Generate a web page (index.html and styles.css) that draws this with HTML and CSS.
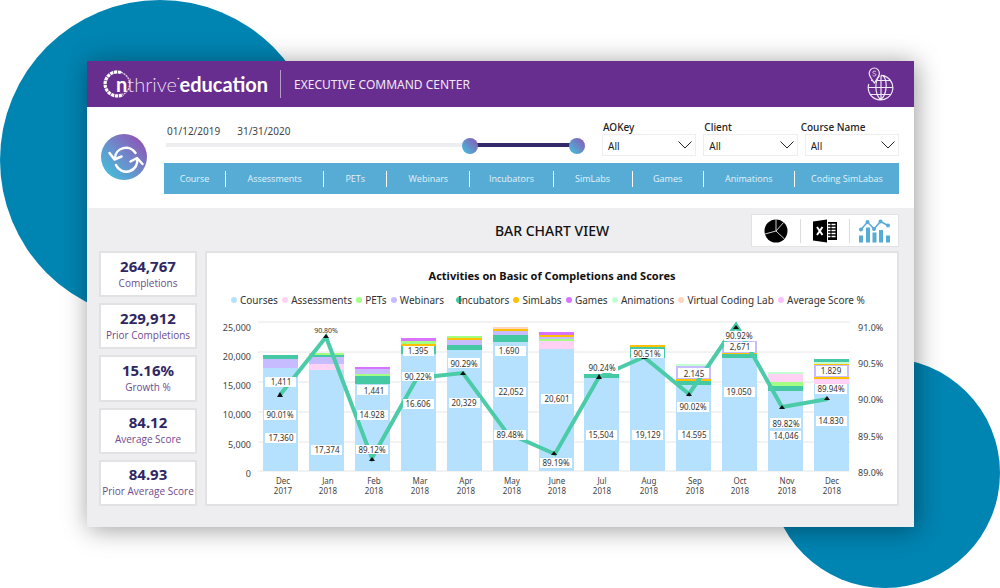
FILE: index.html
```html
<!DOCTYPE html>
<html lang="en">
<head>
<meta charset="utf-8">
<meta name="viewport" content="width=device-width, initial-scale=1">
<title>Executive Command Center</title>
<link rel="stylesheet" href="styles.css">
</head>
<body>
<div class="circle circle-left"></div>
<div class="circle circle-right"></div>
<main class="window">
  <header class="topbar">
    <div class="logo">
      <svg class="logo-ring" viewBox="0 0 28 28" width="28" height="28" aria-hidden="true">
        <path d="M18 2.600A12 12 0 1 0 20 24.400" fill="none" stroke="#fff" stroke-width="3.200" stroke-dasharray="3.200 0.700"/>
        <path d="M18 2.400A12 12 0 0 1 20 24.600" fill="none" stroke="#e4d6ee" stroke-width="1.300" stroke-dasharray="2 0.800"/>
      </svg>
      <span class="logo-n">n</span><span class="logo-thrive">thrive</span><span class="logo-mark">·</span><span class="logo-education">education</span>
    </div>
    <h1 class="app-title">EXECUTIVE COMMAND CENTER</h1>
    <svg class="globe" viewBox="0 0 27 34" width="27" height="34" fill="none" stroke="#f1e9f6" stroke-width="1.200" aria-hidden="true">
      <path d="M14 8.400A12.300 12.300 0 1 1 1.800 17M12.500 8.700C8 13 7 27 13.700 32.500M16 8.700C21 14 20 28 13.700 32.500M14 8.500V32.500M1.500 20.500H26M4 13.500H6M10 13.500H23.500M3.700 27.500H23.700"/>
      <path d="M7.300 16C4.500 11.800 2.200 9.500 2.200 6.300A5.100 5.300 0 0 1 12.400 6.300C12.400 9.500 10 11.800 7.300 16Z"/>
      <path d="M9 4.800C8.500 3.800 5.800 3.800 5.800 5.300C5.800 6.900 9 6.100 9 7.800C9 9.300 6 9.400 5.500 8.100" stroke-width=".8"/>
    </svg>
  </header>

  <section class="controls">
    <button class="refresh" type="button" aria-label="Refresh">
      <svg viewBox="0 0 46 46" width="46" height="46" fill="none" stroke="#fff" stroke-width="2.500" stroke-linecap="round" stroke-linejoin="round">
        <path d="M34.500 19A11 10.500 0 0 0 14 24M8.500 19L13.500 25.500L20.500 22.500M15 31A11 10.500 0 0 0 36 25M29.500 27.500L36 24L41.500 30"/>
      </svg>
    </button>
    <div class="control-rows">
      <div class="filter-row">
        <div class="date-range">
          <div class="dates"><span>01/12/2019</span><span>31/31/2020</span></div>
          <div class="slider">
            <input type="range" min="0" max="403" value="296" aria-label="Start date">
            <input type="range" min="0" max="403" value="403" aria-label="End date">
          </div>
        </div>
        <div class="filters">
          <div class="filter">
            <label for="aokey">AOKey</label>
            <div class="select-box"><select id="aokey"><option>All</option></select><svg viewBox="0 0 14 8" width="14" height="8"><path d="M.5 .5L7 7L13.500 .5"/></svg></div>
          </div>
          <div class="filter">
            <label for="client">Client</label>
            <div class="select-box"><select id="client"><option>All</option></select><svg viewBox="0 0 14 8" width="14" height="8"><path d="M.5 .5L7 7L13.500 .5"/></svg></div>
          </div>
          <div class="filter">
            <label class="label-wide" for="course">Course Name</label>
            <div class="select-box"><select id="course"><option>All</option></select><svg viewBox="0 0 14 8" width="14" height="8"><path d="M.5 .5L7 7L13.500 .5"/></svg></div>
          </div>
        </div>
      </div>
      <nav class="tabs">
        <a href="#course">Course</a><a href="#assessments">Assessments</a><a href="#pets">PETs</a><a href="#webinars">Webinars</a><a href="#incubators">Incubators</a><a href="#simlabs">SimLabs</a><a href="#games">Games</a><a href="#animations">Animations</a><a href="#coding">Coding SimLabas</a>
      </nav>
    </div>
  </section>

  <section class="view">
    <div class="view-head">
      <h2>BAR CHART VIEW</h2>
      <div class="view-buttons">
        <button type="button" aria-label="Pie chart">
          <svg viewBox="0 0 24 24" width="24" height="24"><circle cx="12" cy="12" r="11.500"/><path d="M12 .5V12L1 15M12 12L20 19.500M12 12L19.500 3.500" fill="none" stroke="#fff" stroke-width=".8"/></svg>
        </button>
        <button type="button" aria-label="Export to Excel">
          <svg viewBox="0 0 24 24" width="24" height="24"><path d="M0 2.500L14 .5V23.500L0 21.500ZM15 3H24V21H15Z"/><path d="M4 8L9.500 16M9.500 8L4 16" stroke="#fff" stroke-width="2"/><path d="M15 5.500H17.500M18.500 5.500H22.500M15 8.500H17.500M18.500 8.500H22.500M15 11.500H17.500M18.500 11.500H22.500M15 14.500H17.500M18.500 14.500H22.500M15 17.500H17.500M18.500 17.500H22.500" stroke="#fff" stroke-width="1.700"/></svg>
        </button>
        <button type="button" aria-label="Bar chart">
          <svg viewBox="0 0 32 24" width="32" height="24" fill="#56acd4"><path d="M1 16.500H5V23.500H1ZM8 8.500H12V23.500H8ZM14.500 13.500H18.500V23.500H14.500ZM21 11H25V23.500H21ZM28 16.500H32V23.500H28Z"/><path d="M3 10.500L9.500 3L16 10L22.500 2.500L30 6.500" fill="none" stroke="#56acd4" stroke-width="1.500"/><circle cx="3" cy="10.500" r="2"/><circle cx="9.500" cy="3" r="2"/><circle cx="16" cy="10" r="2"/><circle cx="22.500" cy="2.500" r="2"/><circle cx="30" cy="6.500" r="2"/></svg>
        </button>
      </div>
    </div>

    <div class="view-body">
      <div class="kpis">
        <div class="kpi"><strong>264,767</strong><span>Completions</span></div>
        <div class="kpi"><strong>229,912</strong><span>Prior Completions</span></div>
        <div class="kpi"><strong>15.16%</strong><span>Growth %</span></div>
        <div class="kpi"><strong>84.12</strong><span>Average Score</span></div>
        <div class="kpi"><strong>84.93</strong><span>Prior Average Score</span></div>
      </div>
      <div class="panel">
        <h3>Activities on Basic of Completions and Scores</h3>
        <ul class="legend">
          <li><i class="dot bg-courses"></i>Courses</li>
          <li><i class="dot bg-assess"></i>Assessments</li>
          <li><i class="dot bg-pets"></i>PETs</li>
          <li><i class="dot bg-web"></i>Webinars</li>
          <li class="overlap"><i class="dot bg-inc"></i>Incubators</li>
          <li><i class="dot bg-sim"></i>SimLabs</li>
          <li><i class="dot bg-games"></i>Games</li>
          <li><i class="dot bg-anim"></i>Animations</li>
          <li><i class="dot bg-lab"></i>Virtual Coding Lab</li>
          <li><i class="dot bg-score"></i>Average Score %</li>
        </ul>
        <svg class="chart" viewBox="207 316 690 184" role="img" aria-label="Stacked completions by month with average score line">
          <path class="grid" d="M258 322H850M258 352H850M258 382H850M258 412H850M258 442H850M258 471H850"/>
          <g class="courses">
            <rect x="263" y="368" width="35" height="103"/><rect x="309" y="370" width="35" height="101"/><rect x="355" y="384" width="35" height="87"/><rect x="401" y="354" width="35" height="117"/><rect x="447" y="350" width="35" height="121"/><rect x="493" y="342" width="35" height="129"/><rect x="539" y="349" width="35" height="122"/><rect x="584" y="378" width="35" height="93"/><rect x="630" y="358" width="35" height="113"/><rect x="676" y="385" width="35" height="86"/><rect x="722" y="358" width="35" height="113"/><rect x="768" y="391" width="35" height="80"/><rect x="814" y="384" width="35" height="87"/>
          </g>
          <g class="assess">
            <rect x="309" y="364" width="35" height="6"/><rect x="539" y="341" width="35" height="8"/><rect x="768" y="374" width="35" height="8"/><rect x="814" y="379" width="35" height="5"/>
          </g>
          <g class="pets">
            <rect x="309" y="353" width="35" height="2"/><rect x="355" y="374" width="35" height="2"/><rect x="401" y="341" width="35" height="3"/><rect x="447" y="336" width="35" height="2"/><rect x="539" y="339" width="35" height="2"/><rect x="768" y="382" width="35" height="4"/>
          </g>
          <g class="web">
            <rect x="263" y="359" width="35" height="9"/><rect x="309" y="357" width="35" height="7"/><rect x="355" y="369" width="35" height="5"/><rect x="447" y="340" width="35" height="5"/><rect x="493" y="331" width="35" height="4"/><rect x="539" y="337" width="35" height="2"/><rect x="676" y="366" width="35" height="13"/><rect x="722" y="341" width="35" height="12"/><rect x="814" y="365" width="35" height="12"/>
          </g>
          <g class="inc">
            <rect x="263" y="355" width="35" height="4"/><rect x="309" y="355" width="35" height="2"/><rect x="355" y="376" width="35" height="8"/><rect x="401" y="346" width="35" height="8"/><rect x="447" y="345" width="35" height="5"/><rect x="493" y="335" width="35" height="7"/><rect x="584" y="374" width="35" height="4"/><rect x="630" y="347" width="35" height="11"/><rect x="676" y="381" width="35" height="4"/><rect x="722" y="354" width="35" height="4"/><rect x="768" y="386" width="35" height="5"/><rect x="814" y="359" width="35" height="3"/>
          </g>
          <g class="sim">
            <rect x="401" y="344" width="35" height="2"/><rect x="447" y="338" width="35" height="2"/><rect x="493" y="329" width="35" height="2"/><rect x="539" y="335" width="35" height="2"/><rect x="630" y="345" width="35" height="2"/><rect x="676" y="379" width="35" height="2"/><rect x="722" y="353" width="35" height="1"/><rect x="814" y="364" width="35" height="1"/><rect x="814" y="377" width="35" height="2"/>
          </g>
          <g class="games"><rect x="355" y="367" width="35" height="2"/><rect x="401" y="338" width="35" height="3"/><rect x="539" y="332" width="35" height="3"/></g>
          <g class="anim"><rect x="676" y="364" width="35" height="2"/><rect x="768" y="372" width="35" height="2"/><rect x="814" y="362" width="35" height="2"/></g>
          <g class="lab"><rect x="493" y="327" width="35" height="2"/></g>
          <polyline class="score" points="280,395 326,337 372,458 417,378 463,373 507,433 555,454 599,377 644,357 689,394 736,325 782,407 828,399"/>
          <g class="plate">
            <rect x="265" y="377" width="31" height="10"/><rect x="264" y="410" width="32" height="10"/><rect x="265" y="433" width="31" height="10"/>
            <rect x="311" y="445" width="31" height="10"/>
            <rect x="357" y="385" width="31" height="10"/><rect x="357" y="410" width="31" height="10"/><rect x="356" y="445" width="32" height="9"/>
            <rect x="403" y="346" width="31" height="10"/><rect x="402" y="372" width="32" height="9"/><rect x="403" y="399" width="31" height="10"/>
            <rect x="448" y="358" width="32" height="10"/><rect x="449" y="398" width="31" height="10"/>
            <rect x="495" y="346" width="31" height="10"/><rect x="495" y="387" width="31" height="10"/><rect x="494" y="430" width="32" height="10"/>
            <rect x="541" y="394" width="31" height="10"/><rect x="540" y="458" width="32" height="10"/>
            <rect x="586" y="363" width="32" height="10"/><rect x="586" y="430" width="31" height="10"/>
            <rect x="631" y="349" width="33" height="9"/><rect x="632" y="430" width="31" height="10"/>
            <rect x="678" y="368" width="31" height="10"/><rect x="677" y="402" width="32" height="10"/><rect x="678" y="430" width="31" height="10"/>
            <rect x="724" y="331" width="32" height="10"/><rect x="724" y="342" width="31" height="10"/><rect x="724" y="387" width="31" height="10"/>
            <rect x="770" y="418" width="31" height="10"/><rect x="770" y="431" width="31" height="9"/>
            <rect x="816" y="366" width="31" height="10"/><rect x="815" y="384" width="32" height="10"/><rect x="816" y="416" width="31" height="10"/>
          </g>
          <g class="marker">
            <path d="M277 397L280 392L283 397ZM323 338L326 334L329 338ZM369 461L372 457L375 461ZM460 375L463 371L466 375ZM551 455L554 451L557 455ZM596 379L599 374L602 379ZM641 359H648L646 358H642ZM686 396L689 392L692 396Z"/>
            <path class="peak" d="M733 329L736 325L739 329Z"/>
            <path d="M733 329L736 325L739 329ZM779 409L782 405L785 409ZM824 400L827 396L830 400Z"/>
          </g>
          <g class="values">
            <text x="281" y="385">1,411</text><text x="280" y="418">90.01%</text><text x="281" y="441">17,360</text>
            <text x="326" y="333" class="tight">90.80%</text><text x="327" y="453">17,374</text>
            <text x="374" y="394">1,441</text><text x="372" y="418">14.928</text><text x="372" y="453">89.12%</text>
            <text x="418" y="354">1.395</text><text x="418" y="380">90.22%</text><text x="418" y="407">16.606</text>
            <text x="464" y="367">90.29%</text><text x="464" y="406">20,329</text>
            <text x="509" y="354">1.690</text><text x="511" y="395">22,052</text><text x="510" y="438">89.48%</text>
            <text x="557" y="402">20,601</text><text x="556" y="466">89.19%</text>
            <text x="602" y="371">90.24%</text><text x="601" y="438">15,504</text>
            <text x="647" y="357">90.51%</text><text x="648" y="438">19,129</text>
            <text x="694" y="377">2.145</text><text x="693" y="410">90.02%</text><text x="694" y="438">14.595</text>
            <text x="739" y="339">90.92%</text><text x="740" y="350">2,671</text><text x="739" y="395">19.050</text>
            <text x="786" y="427">89.82%</text><text x="786" y="439">14,046</text>
            <text x="831" y="374">1.829</text><text x="831" y="392">89.94%</text><text x="831" y="424">14.830</text>
          </g>
          <g class="axis axis-left">
            <text x="251" y="331">25,000</text><text x="251" y="360">20,000</text><text x="251" y="389">15,000</text><text x="251" y="418">10,000</text><text x="251" y="448">5,000</text><text x="251" y="477">0</text>
          </g>
          <g class="axis">
            <text x="858" y="331">91.0%</text><text x="858" y="367">90.5%</text><text x="858" y="403">90.0%</text><text x="858" y="440">89.5%</text><text x="858" y="476">89.0%</text>
          </g>
          <g class="months">
            <text y="484"><tspan x="283">Dec</tspan><tspan x="283" dy="10">2017</tspan></text>
            <text y="484"><tspan x="328">Jan</tspan><tspan x="328" dy="10">2018</tspan></text>
            <text y="484"><tspan x="374">Feb</tspan><tspan x="374" dy="10">2018</tspan></text>
            <text y="484"><tspan x="420">Mar</tspan><tspan x="420" dy="10">2018</tspan></text>
            <text y="484"><tspan x="466">Apr</tspan><tspan x="466" dy="10">2018</tspan></text>
            <text y="484"><tspan x="512">May</tspan><tspan x="512" dy="10">2018</tspan></text>
            <text y="484"><tspan x="557">June</tspan><tspan x="557" dy="10">2018</tspan></text>
            <text y="484"><tspan x="602">Jul</tspan><tspan x="602" dy="10">2018</tspan></text>
            <text y="484"><tspan x="649">Aug</tspan><tspan x="649" dy="10">2018</tspan></text>
            <text y="484"><tspan x="695">Sep</tspan><tspan x="695" dy="10">2018</tspan></text>
            <text y="484"><tspan x="740">Oct</tspan><tspan x="740" dy="10">2018</tspan></text>
            <text y="484"><tspan x="787">Nov</tspan><tspan x="787" dy="10">2018</tspan></text>
            <text y="484"><tspan x="832">Dec</tspan><tspan x="832" dy="10">2018</tspan></text>
          </g>
        </svg>
      </div>
    </div>
  </section>
</main>
</body>
</html>
```
FILE: styles.css
```css
* { box-sizing: border-box; }

body {
  margin: 0;
  min-height: 100vh;
  padding: 61px 86px 61px 87px;
  display: flex;
  position: relative;
  overflow: hidden;
  background: #fff;
  color: #333;
  font-family: "Noto Sans", "Open Sans", sans-serif;
  font-size: 10px;
}

h1, h2, h3, ul { margin: 0; padding: 0; }
button { border: 0; padding: 0; background: none; cursor: pointer; }

.circle { position: absolute; border-radius: 50%; background: #0084b2; }
.circle-left { left: 0; top: 0; width: 320px; height: 320px; }
.circle-right { right: 0; bottom: 0; width: 230px; height: 230px; }

.window {
  position: relative;
  flex: 1;
  display: flex;
  flex-direction: column;
  background: #eeeef0;
  box-shadow: 2px 2px 24px rgba(0, 0, 0, .4);
}

/* Header */
.topbar {
  display: flex;
  align-items: center;
  height: 46px;
  padding: 0 20px 0 16px;
  background: #672d8f;
  color: #fff;
}
.logo {
  display: flex;
  align-items: center;
  padding-right: 12px;
  border-right: 1px solid #b59bc8;
  font-family: Lato, sans-serif;
  font-size: 20px;
  line-height: 26px;
}
.logo-ring { flex: none; margin-right: -15px; }
.logo-n { font-weight: 700; }
.logo-thrive { font-weight: 300; color: #e8dcf0; }
.logo-mark { font-size: 10px; line-height: 14px; align-self: flex-start; }
.logo-education { font-weight: 700; }
.app-title { flex: 1; padding-left: 13px; font-size: 12px; font-weight: 400; color: #f1e9f6; }

/* Controls */
.controls {
  display: flex;
  gap: 17px;
  padding: 13px 15px 14px 14px;
  background: #fff;
}
.refresh {
  flex: none;
  width: 46px;
  height: 46px;
  margin-top: 14px;
  border-radius: 50%;
  background: linear-gradient(45deg, #3fc4dd 5%, #6d8bcb 50%, #8e53b4 90%);
}
.refresh svg { display: block; }
.control-rows { flex: 1; min-width: 0; }
.filter-row { display: flex; gap: 17px; height: 43px; }
.date-range { flex: 1; padding: 4px 0 0 2px; }
.dates { display: flex; gap: 17px; padding-left: 1px; line-height: 14px; color: #444; }
.slider {
  display: grid;
  align-items: center;
  height: 14px;
  background:
    linear-gradient(#322a6b, #322a6b) right 8px center / 107px 4px no-repeat,
    linear-gradient(#eeeef1, #eeeef1) left center / 100% 4px no-repeat;
}
.slider input {
  grid-area: 1 / 1;
  width: 100%;
  height: 16px;
  margin: 0;
  appearance: none;
  background: none;
  pointer-events: none;
}
.slider input::-webkit-slider-thumb {
  appearance: none;
  width: 16px;
  height: 16px;
  border-radius: 50%;
  background: linear-gradient(45deg, #3fc4dd, #8e53b4);
  pointer-events: auto;
}

.filters { display: flex; gap: 7px; width: 297px; }
.filter { flex: 1; }
.filter label { display: block; padding-left: 1px; line-height: 14px; color: #222; font-weight: 500; }
.filter .label-wide { margin-left: -4px; padding: 0; }
.select-box { display: grid; align-items: center; height: 22px; border: 1px solid #eeeef0; background: #fff; }
.select-box select {
  grid-area: 1 / 1;
  width: 100%;
  height: 20px;
  padding: 2px 5px 0;
  border: 0;
  appearance: none;
  background: none;
  color: #222;
  font: inherit;
}
.select-box svg {
  grid-area: 1 / 1;
  justify-self: end;
  margin-right: 3px;
  fill: none;
  stroke: #222;
  pointer-events: none;
}

.tabs {
  display: grid;
  grid-template-columns: 62fr 98fr 63fr 83fr 83fr 79fr 71fr 91fr 104fr;
  align-items: center;
  height: 31px;
  background: #56acd4;
}
.tabs a {
  border-right: 1px solid #fff;
  color: #e2f2fa;
  font-family: "Open Sans", sans-serif;
  font-size: 9px;
  line-height: 16px;
  text-align: center;
  text-decoration: none;
  white-space: nowrap;
}
.tabs a:last-child { border: 0; }

/* View */
.view { flex: 1; display: flex; flex-direction: column; padding: 6px 15px 21px 12px; }
.view-head { display: grid; grid-template-columns: 98px 1fr; column-gap: 8px; align-items: center; }
.view-head h2 {
  grid-area: 1 / 2;
  color: #111;
  font-size: 14px;
  font-weight: 500;
  text-align: center;
}
.view-buttons {
  grid-area: 1 / 2;
  justify-self: end;
  display: flex;
  align-items: center;
  height: 33px;
  border: 1px solid #e2e2e4;
  background: #fff;
}
.view-buttons button {
  display: flex;
  justify-content: center;
  align-items: center;
  width: 49px;
  height: 24px;
  border-right: 1px solid #ddd;
}
.view-buttons button:last-child { width: 48px; border: 0; }

.view-body { flex: 1; display: grid; grid-template-columns: 98px 1fr; gap: 8px; padding-top: 4px; }
.kpis { display: grid; gap: 6px; grid-auto-rows: 1fr; }
.kpi {
  display: flex;
  flex-direction: column;
  align-items: center;
  justify-content: center;
  border: 2px solid #e2e2e4;
  background: #fff;
}
.kpi strong { color: #2f2762; font-size: 15px; line-height: 17px; }
.kpi span {
  color: #6f4a8e;
  font-family: "Open Sans", sans-serif;
  font-size: 10px;
  line-height: 16px;
  white-space: nowrap;
}

.panel { border: 2px solid #e2e2e4; background: #fff; }
.panel h3 { padding-top: 15px; color: #111; font-size: 11px; line-height: 16px; text-align: center; }
.legend {
  display: flex;
  justify-content: space-between;
  padding: 8px 32px 8px 24px;
  color: #333;
  line-height: 16px;
  list-style: none;
}
.legend li { display: flex; align-items: center; gap: 3px; white-space: nowrap; }
.legend .overlap { gap: 0; margin-left: 8px; }
.legend .overlap .dot { margin-right: -4px; }
.dot { width: 6px; height: 6px; border-radius: 50%; }
.bg-courses { background: #b5e1ff; }
.bg-assess { background: #ffd2f4; }
.bg-pets { background: #a2ff83; }
.bg-web { background: #c6bcff; }
.bg-inc { background: #45c9a5; }
.bg-sim { background: #ffc000; }
.bg-games { background: #d873ff; }
.bg-anim { background: #c2ffd2; }
.bg-lab { background: #ffd6bd; }
.bg-score { background: #fcbfff; }

/* Chart */
.chart { display: block; width: 100%; height: auto; }
.grid { stroke: #e6e6e6; fill: none; }
.courses { fill: #b5e1ff; }
.assess { fill: #ffd2f4; }
.pets { fill: #a2ff83; }
.web { fill: #c6bcff; }
.inc { fill: #45c9a5; }
.sim { fill: #ffc000; }
.games { fill: #d873ff; }
.anim { fill: #c2ffd2; }
.lab { fill: #ffd6bd; }
.score { fill: none; stroke: #4ccba8; stroke-width: 4; }
.plate { fill: #fff; }
.marker { fill: #111; }
.marker .peak { fill: #45c9a5; stroke: #45c9a5; stroke-width: 3; }
.values { fill: #333; font-size: 8px; text-anchor: middle; }
.values .tight { font-size: 7px; }
.axis { fill: #444; font-size: 9px; }
.axis-left { text-anchor: end; }
.months { fill: #444; font-size: 8px; text-anchor: middle; }
```
